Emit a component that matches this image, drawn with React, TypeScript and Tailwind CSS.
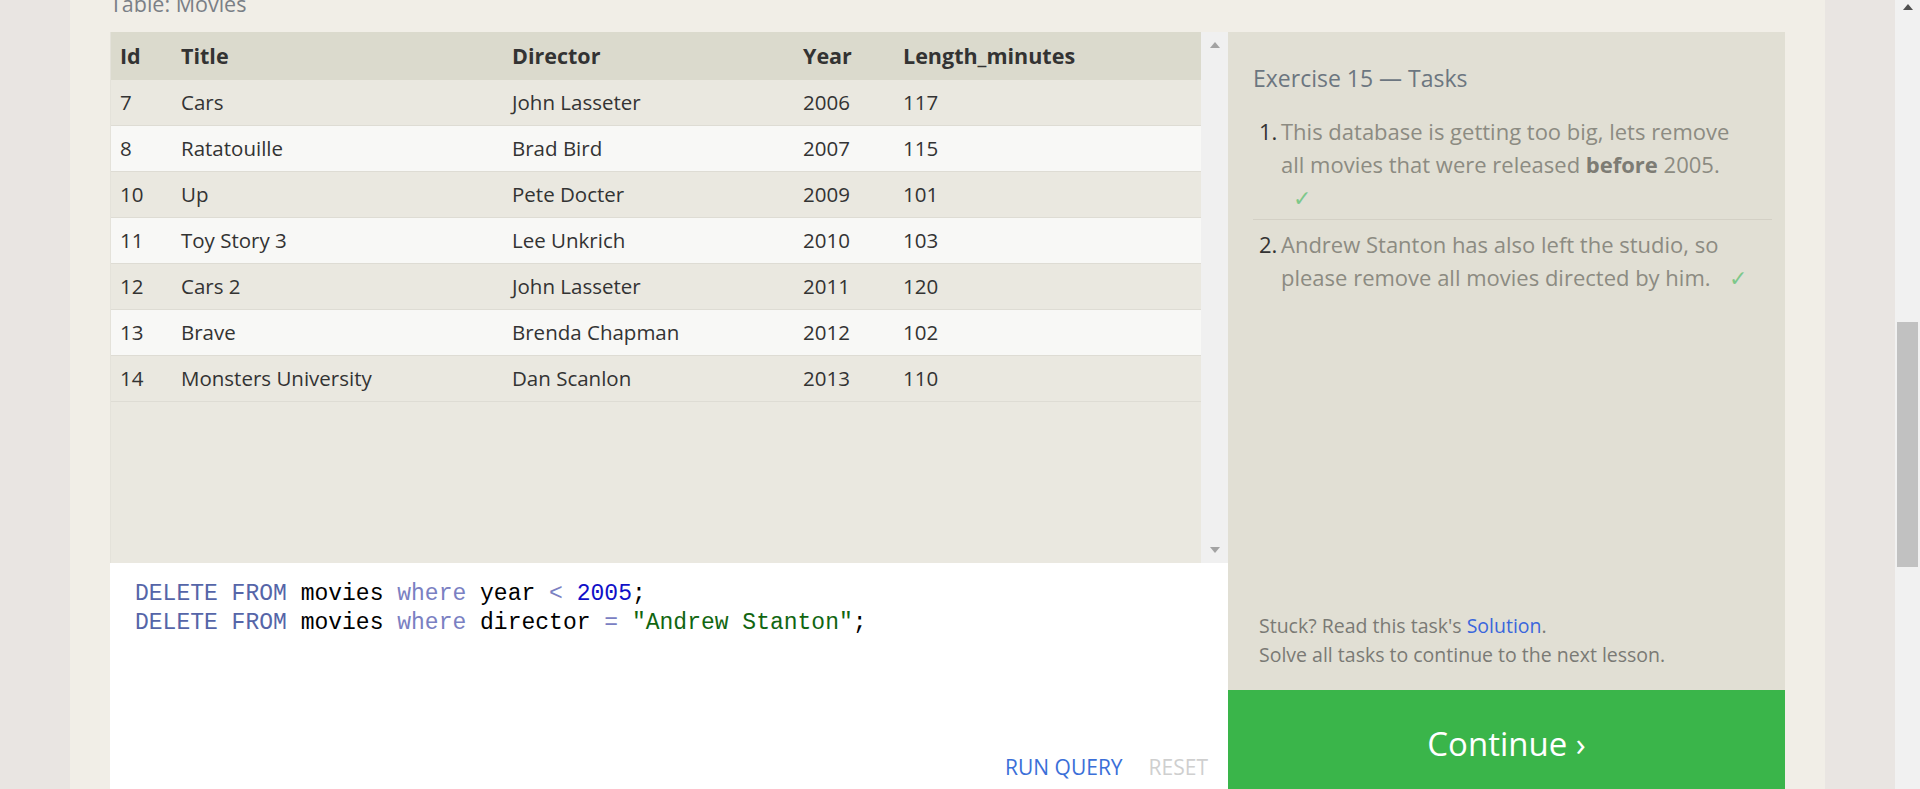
import React from 'react'

type Movie = {
  id: number
  title: string
  director: string
  year: number
  length: number
}

const movies: Movie[] = [
  { id: 7, title: 'Cars', director: 'John Lasseter', year: 2006, length: 117 },
  { id: 8, title: 'Ratatouille', director: 'Brad Bird', year: 2007, length: 115 },
  { id: 10, title: 'Up', director: 'Pete Docter', year: 2009, length: 101 },
  { id: 11, title: 'Toy Story 3', director: 'Lee Unkrich', year: 2010, length: 103 },
  { id: 12, title: 'Cars 2', director: 'John Lasseter', year: 2011, length: 120 },
  { id: 13, title: 'Brave', director: 'Brenda Chapman', year: 2012, length: 102 },
  { id: 14, title: 'Monsters University', director: 'Dan Scanlon', year: 2013, length: 110 },
]

const cols = 'grid grid-cols-[61px_331px_291px_100px_1fr] pl-[9px] items-center'

const Check = ({ gap }: { gap: string }) => <span className={`text-[#7dc88a] ${gap}`}>✓</span>

const App = () => {
  return (
    <div className="flex h-[789px] overflow-hidden bg-[#e9e5e2] font-['Open_Sans',sans-serif] text-[#333]">
      <div className="flex-1 px-[70px]">
        <div className="h-[820px] bg-[#f1eee7] px-[40px] mt-[-14px]">
          <div className="h-[46px] pt-[3px] text-[21.5px] leading-[30px] text-[#7a7f86]">Table: Movies</div>
          <div className="grid grid-cols-[1118px_557px]">
            {/* left: results + editor */}
            <div className="flex flex-col">
              <div className="flex h-[531px] border-l border-[#e4e2da]">
                <div className="flex-1 bg-[#eae8e0] text-[20.5px]">
                  <div className={`${cols} h-[48px] bg-[#dbdacd] font-bold text-[21.5px]`}>
                    <div>Id</div>
                    <div>Title</div>
                    <div>Director</div>
                    <div>Year</div>
                    <div>Length_minutes</div>
                  </div>
                  {movies.map((m, i) => (
                    <div
                      key={m.id}
                      className={`${cols} h-[46px] border-b border-[#dedcd4] ${i % 2 === 1 ? 'bg-[#f8f8f6]' : 'bg-[#eae8e0]'}`}
                    >
                      <div>{m.id}</div>
                      <div>{m.title}</div>
                      <div>{m.director}</div>
                      <div>{m.year}</div>
                      <div>{m.length}</div>
                    </div>
                  ))}
                </div>
                <div className="w-[27px] bg-[#f0f0f0] flex flex-col items-center justify-between pt-[10px] pb-[10px]">
                  <div className="w-0 h-0 border-x-[5.5px] border-x-transparent border-b-[6px] border-b-[#a3a3a3]"></div>
                  <div className="w-0 h-0 border-x-[5.5px] border-x-transparent border-t-[6px] border-t-[#a3a3a3]"></div>
                </div>
              </div>
              <div className="h-[240px] bg-white flex flex-col justify-between pl-[25px] pr-[20px] pt-[17px] pb-[23px]">
                <div className="font-['Liberation_Mono',monospace] text-[23px] leading-[29px] text-black whitespace-pre">
                  <div>
                    <span className="text-[#5565a8]">DELETE FROM</span> movies <span className="text-[#7a80c2]">where</span> year <span className="text-[#7a80c2]">&lt;</span> <span className="text-[#1010c8]">2005</span>;
                  </div>
                  <div>
                    <span className="text-[#5565a8]">DELETE FROM</span> movies <span className="text-[#7a80c2]">where</span> director <span className="text-[#7a80c2]">=</span> <span className="text-[#116611]">"Andrew Stanton"</span>;
                  </div>
                </div>
                <div className="flex justify-end gap-[26px] text-[21px] leading-[26px]">
                  <span className="text-[#3b6fd8]">RUN QUERY</span>
                  <span className="text-[#cfcfcf]">RESET</span>
                </div>
              </div>
            </div>

            {/* right: tasks */}
            <div className="flex flex-col h-[778px]">
              <div className="flex-1 bg-[#e1dfd4] pl-[25px] pr-[13px] pt-[30px] flex flex-col">
                <div className="text-[23px] leading-[32px] text-[#6c7680]">Exercise 15 — Tasks</div>
                <ol className="mt-[21px] text-[22px] leading-[33px] text-[#8c8b82]">
                  <li className="flex pb-[5px] border-b border-[#d3d0c5]">
                    <span className="w-[28px] shrink-0 pl-[6px] text-[#333]">1.</span>
                    <span className="pr-[20px]">
                      This database is getting too big, lets remove all movies that were released <b className="text-[#7d7c74]">before</b> 2005.
                      <br />
                      <Check gap="ml-[12px]" />
                    </span>
                  </li>
                  <li className="flex pt-[8px]">
                    <span className="w-[28px] shrink-0 pl-[6px] text-[#333]">2.</span>
                    <span className="pr-[20px]">
                      Andrew Stanton has also left the studio, so please remove all movies directed by{' '}
                      <span className="whitespace-nowrap">
                        him.
                        <Check gap="ml-[18px]" />
                      </span>
                    </span>
                  </li>
                </ol>
                <div className="mt-auto mb-[21px] pl-[6px] text-[19.5px] leading-[29px] text-[#7a7a75]">
                  <div>
                    Stuck? Read this task's <span className="text-[#3a66dc]">Solution</span>.
                  </div>
                  <div>Solve all tasks to continue to the next lesson.</div>
                </div>
              </div>
              <div className="h-[120px] bg-[#3ab54a] text-white text-[33px] flex justify-center pt-[29px]">
                Continue ›
              </div>
            </div>
          </div>
        </div>
      </div>

      {/* browser scrollbar */}
      <div className="w-[25px] bg-[#f1f1f1] flex flex-col items-center">
        <div className="mt-[4px] w-0 h-0 border-x-[5.5px] border-x-transparent border-b-[6px] border-b-[#505050]"></div>
        <div className="w-[21px] h-[245px] bg-[#c1c1c1] mt-[312px]"></div>
      </div>
    </div>
  )
}

export default App
